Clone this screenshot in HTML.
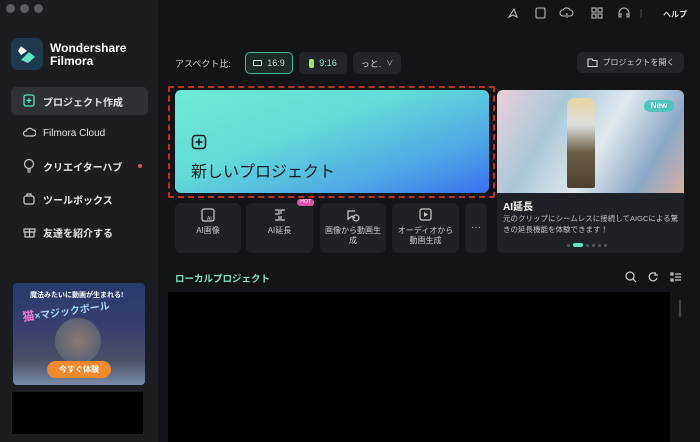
<!DOCTYPE html>
<html><head><meta charset="utf-8"><style>
*{margin:0;padding:0;box-sizing:border-box}
body{width:700px;height:442px;background:#121417;font-family:"Liberation Sans","Noto Sans CJK JP",sans-serif;color:#e6e8ea;position:relative;overflow:hidden}
.a{position:absolute}
.side{left:0;top:0;width:158px;height:442px;background:#1b1d21}
.dot{width:9px;height:9px;border-radius:50%;background:#5a5d62;top:4px}
.nav{left:11px;width:137px;height:28px;border-radius:5px;font-size:10px;font-weight:bold;color:#e3e5e7;display:flex;align-items:center;padding-left:32px}
.nav svg{position:absolute;left:12px;top:7px}
.btn{background:#22252a;border-radius:5px;font-size:9px;color:#d0d3d6;display:flex;align-items:center;justify-content:center;gap:5px}
.tool{top:203px;height:50px;background:#1e2125;border-radius:6px;font-size:8px;color:#c9ccd0;text-align:center;line-height:10px}
.tool svg{display:block;margin:5px auto 4px}
</style></head><body>
<div class="a side"></div>
<div class="a dot" style="left:6px"></div><div class="a dot" style="left:20px"></div><div class="a dot" style="left:34px"></div>
<div class="a" style="left:11px;top:38px;width:32px;height:32px;border-radius:7px;background:#1f3a4d"></div>
<svg class="a" style="left:17px;top:43px" width="20" height="22"><path d="M4 3 l6 5 -6 4 -3 -4z" fill="#fff"/><path d="M12 9 l6 5 -7 6 -7 -3z" fill="#5fe3c4"/></svg>
<div class="a" style="left:50px;top:42px;font-size:12px;font-weight:bold;color:#fff;line-height:13px">Wondershare<br>Filmora</div>
<div class="a nav" style="top:87px;background:#2e3136">プロジェクト作成<svg width="12" height="13"><rect x="1" y="1" width="10" height="11" rx="2" fill="none" stroke="#5fe3c4" stroke-width="1.3"/><path d="M6 4v5M3.5 6.5h5" stroke="#5fe3c4" stroke-width="1.3"/></svg></div>
<div class="a nav" style="top:119px;font-weight:normal">Filmora Cloud<svg width="13" height="12"><path d="M3 10h7a3 3 0 0 0 0-6 4 4 0 0 0-7 1 2.5 2.5 0 0 0 0 5z" fill="none" stroke="#ccc" stroke-width="1.2"/></svg></div>
<div class="a nav" style="top:152px">クリエイターハブ<svg width="12" height="14"><circle cx="6" cy="5" r="4.5" fill="none" stroke="#ccc" stroke-width="1.2"/><path d="M4 11h4M4.5 13h3" stroke="#ccc" stroke-width="1.2"/></svg></div>
<div class="a" style="left:138px;top:164px;width:4px;height:4px;border-radius:50%;background:#e0525a"></div>
<div class="a nav" style="top:185px">ツールボックス<svg width="12" height="13"><rect x="1" y="4" width="10" height="8" rx="2" fill="none" stroke="#ccc" stroke-width="1.2"/><path d="M4 4V2h4v2" fill="none" stroke="#ccc" stroke-width="1.2"/></svg></div>
<div class="a nav" style="top:218px">友達を紹介する<svg width="13" height="13"><rect x="1" y="4" width="11" height="3" fill="none" stroke="#ccc" stroke-width="1.2"/><rect x="2" y="7" width="9" height="5" fill="none" stroke="#ccc" stroke-width="1.2"/><path d="M6.5 4v8" stroke="#ccc" stroke-width="1.2"/></svg></div>
<div class="a" style="left:13px;top:283px;width:132px;height:102px;border-radius:4px;background:linear-gradient(180deg,#283b6b 0%,#3a3f6e 45%,#4a4f66 75%,#7a8aa6 100%)"></div>
<div class="a" style="left:30px;top:290px;font-size:7px;color:#fff;font-weight:bold">魔法みたいに動画が生まれる!</div>
<div class="a" style="left:22px;top:302px;font-size:12px;color:#f07ad0;font-weight:bold;transform:rotate(-8deg)">猫<span style="color:#9fd8ff;font-size:10px">×マジックボール</span></div>
<div class="a" style="left:55px;top:318px;width:46px;height:46px;border-radius:50%;background:radial-gradient(#8a7a70,#4a5878)"></div>
<div class="a" style="left:47px;top:361px;width:64px;height:17px;border-radius:9px;background:#f08a2c;font-size:8px;color:#fff;font-weight:bold;text-align:center;line-height:17px">今すぐ体験</div>
<div class="a" style="left:12px;top:392px;width:131px;height:42px;background:#000"></div>

<div class="a" style="left:175px;top:57px;font-size:9px;color:#d0d3d6">アスペクト比:</div>
<div class="a btn" style="left:245px;top:52px;width:48px;height:22px;border:1px solid #4fb39c;background:#1c2a28"><span style="display:inline-block;width:9px;height:6px;border:1px solid #ddd;border-radius:1px"></span>16:9</div>
<div class="a btn" style="left:299px;top:52px;width:48px;height:22px;color:#8fe6c6"><span style="display:inline-block;width:5px;height:9px;background:#9fe26e;border-radius:2px"></span>9:16</div>
<div class="a btn" style="left:353px;top:52px;width:48px;height:22px">っと. <span style="font-size:7px">∨</span></div>
<div class="a btn" style="left:577px;top:52px;width:107px;height:21px;font-size:8px"><svg width="11" height="9"><path d="M1 1h4l1 1.5h4v6H1z" fill="none" stroke="#ddd" stroke-width="1.1"/></svg>プロジェクトを開く</div>

<svg class="a" style="left:505px;top:6px" width="190" height="14"><g fill="none" stroke="#bbb" stroke-width="1.1"><path d="M4 11l5-8 3 8-4-2z"/><rect x="31" y="2" width="9" height="10" rx="1.5"/><path d="M61 10h-3a3 3 0 0 1 0-6 4 4 0 0 1 7 0 3 3 0 0 1 0 6h-2M62 7v5"/><rect x="87" y="2" width="4" height="4"/><rect x="93" y="2" width="4" height="4"/><rect x="87" y="8" width="4" height="4"/><rect x="93" y="8" width="4" height="4"/><path d="M114 9V7a5 5 0 0 1 10 0v2M114 8h2v3h-2zM122 8h2v3h-2z"/><path d="M136 3v9" stroke="#444"/></g><text x="158" y="11" font-size="8" fill="#ddd" font-weight="bold" font-family="Liberation Sans,Noto Sans CJK JP,sans-serif">ヘルプ</text></svg>

<div class="a" style="left:168px;top:86px;width:327px;height:112px;border:2px dashed #c0321f;border-radius:2px"></div>
<div class="a" style="left:175px;top:90px;width:314px;height:103px;border-radius:6px;background:linear-gradient(160deg,#6ee9d2 0%,#62dcd8 40%,#4ea6e6 75%,#3a6fee 100%)"></div>
<svg class="a" style="left:191px;top:134px" width="16" height="16"><rect x="1.5" y="1.5" width="13" height="13" rx="3" fill="none" stroke="#1a1d22" stroke-width="1.6"/><path d="M8 4.5v7M4.5 8h7" stroke="#1a1d22" stroke-width="1.6"/></svg>
<div class="a" style="left:191px;top:158px;font-size:16px;color:#1a1d22">新しいプロジェクト</div>

<div class="a" style="left:497px;top:90px;width:187px;height:163px;border-radius:6px;background:#1e2125;overflow:hidden">
<div style="height:103px;background:linear-gradient(120deg,#e8d0d8 0%,#a9c8d8 30%,#e0e8ec 55%,#8aa8c8 80%,#d8b0a0 100%);position:relative">
<div style="position:absolute;left:70px;top:8px;width:28px;height:90px;background:linear-gradient(#e9d6a0 0%,#ddd 30%,#6d6048 60%,#4a4030 100%);border-radius:8px 8px 2px 2px"></div>
<div style="position:absolute;right:10px;top:10px;width:30px;height:12px;border-radius:6px;background:#4fc3c0;font-size:8px;color:#fff;text-align:center;line-height:12px;font-weight:bold">New</div></div>
<div style="position:absolute;left:6px;top:108px;font-size:10px;font-weight:bold;color:#fff">AI延長</div>
<div style="position:absolute;left:6px;top:123px;font-size:7.5px;color:#bfc3c7;line-height:11px;width:180px">元のクリップにシームレスに接続してAIGCによる驚きの延長機能を体験できます！</div>
<div style="position:absolute;left:70px;top:153px;display:flex;gap:3px;align-items:center"><i style="width:3px;height:3px;border-radius:50%;background:#555"></i><i style="width:10px;height:4px;border-radius:2px;background:#5fe3c4"></i><i style="width:3px;height:3px;border-radius:50%;background:#555"></i><i style="width:3px;height:3px;border-radius:50%;background:#555"></i><i style="width:3px;height:3px;border-radius:50%;background:#555"></i><i style="width:3px;height:3px;border-radius:50%;background:#555"></i></div>
</div>

<div class="a tool" style="left:175px;width:66px"><svg width="14" height="14"><rect x="1" y="1" width="12" height="12" rx="2" fill="none" stroke="#ccc" stroke-width="1.2"/><text x="6" y="12" font-size="5" fill="#ccc">AI</text></svg>AI画像</div>
<div class="a tool" style="left:246px;width:67px"><svg width="14" height="14"><path d="M2 2h4v4H2M12 2H8v4M2 12h4V8M12 12H8V8" fill="none" stroke="#ccc" stroke-width="1.2"/></svg>AI延長</div>
<div class="a" style="left:297px;top:199px;width:17px;height:7px;border-radius:3px;background:#e04fa8;font-size:5px;color:#fff;text-align:center;line-height:7px">HOT</div>
<div class="a tool" style="left:320px;width:66px"><svg width="14" height="14"><path d="M2 12V3h7M2 11l4-3 3 2" fill="none" stroke="#ccc" stroke-width="1.2"/><circle cx="10" cy="10" r="3" fill="none" stroke="#ccc" stroke-width="1.2"/></svg>画像から動画生<br>成</div>
<div class="a tool" style="left:392px;width:67px"><svg width="14" height="14"><rect x="1" y="1" width="11" height="11" rx="2" fill="none" stroke="#ccc" stroke-width="1.2"/><path d="M5 4l4 2.5L5 9z" fill="#ccc"/></svg>オーディオから<br>動画生成</div>
<div class="a tool" style="left:465px;width:22px;line-height:50px;font-size:10px">···</div>

<div class="a" style="left:175px;top:271px;font-size:9.5px;font-weight:bold;color:#7de0c2">ローカルプロジェクト</div>
<svg class="a" style="left:624px;top:270px" width="60" height="14"><g fill="none" stroke="#ccc" stroke-width="1.2"><circle cx="6" cy="6" r="4"/><path d="M9 9l3 3"/><path d="M32 4a4 4 0 1 0 1 4M31 2v3h3"/><path d="M47 3h2v2h-2zM47 9h2v2h-2zM51 4h6M51 7h6M51 10h6"/></g></svg>
<div class="a" style="left:168px;top:292px;width:502px;height:150px;background:#000"></div>
<div class="a" style="left:679px;top:300px;width:2px;height:17px;background:#444;border-radius:1px"></div>
</body></html>
